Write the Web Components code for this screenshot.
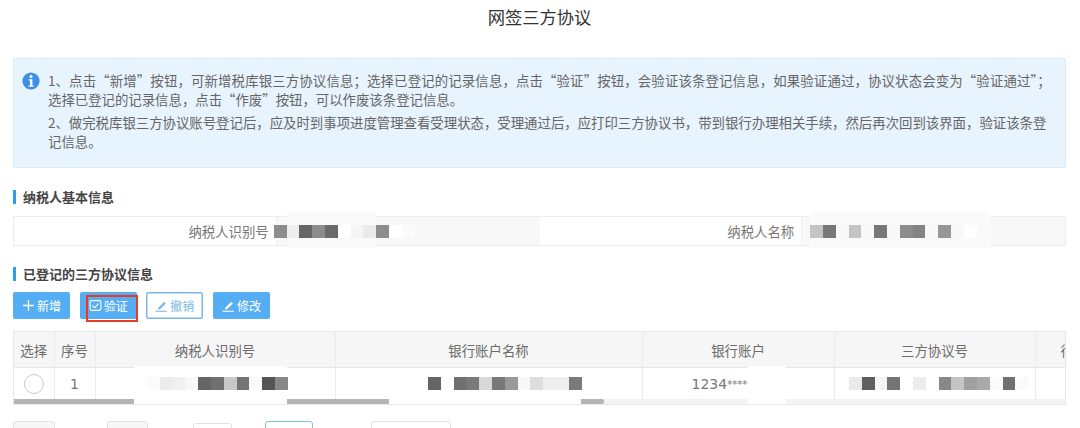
<!DOCTYPE html>
<html lang="zh-CN">
<head>
<meta charset="utf-8">
<title>网签三方协议</title>
<style>
    html, body { margin: 0; height: 428px; overflow: hidden; background: #fff; }
    body { box-sizing: border-box; padding: 0 14px 0 13px; font-family: "Noto Sans CJK SC", "Noto Sans", sans-serif; color: #666; }
    .wide { letter-spacing: .15px; }
</style>
</head>
<body>
<page-title>网签三方协议</page-title>
<tip-box>
    <p><span class="wide">1、点击“新增”按钮，可新增税库银三方协议信息；选择已登记的记录信息，点击“验证”按钮，会验证该条登记信息，如果验证通过，协议状态会变为“验证通过”；</span><br>选择已登记的记录信息，点击“作废”按钮，可以作废该条登记信息。</p>
    <p>2、做完税库银三方协议账号登记后，应及时到事项进度管理查看受理状态，受理通过后，应打印三方协议书，带到银行办理相关手续，然后再次回到该界面，验证该条登<br>记信息。</p>
</tip-box>
<section-title>纳税人基本信息</section-title>
<info-row></info-row>
<section-title class="second">已登记的三方协议信息</section-title>
<action-bar></action-bar>
<agreement-table></agreement-table>
<pager-stub></pager-stub>

<script>
    class PageTitle extends HTMLElement {
        constructor() {
            super();
            this.attachShadow({ mode: 'open' }).innerHTML = `
                <style>
                :host { display: block; height: 58px; text-align: center; font-size: 17.3px; line-height: 34px; color: #333; }
                </style>
                <slot></slot>`;
        }
    }

    class TipBox extends HTMLElement {
        constructor() {
            super();
            this.attachShadow({ mode: 'open' }).innerHTML = `
                <style>
                :host {
                    display: flex; gap: 8px; box-sizing: border-box; height: 110px;
                    padding: 12px 8px 0 8px;
                    background: #e7f3fd; border: 1px solid #d9ebf8; border-radius: 2px;
                    font-size: 13.4px; line-height: 18.5px; color: #666;
                }
                svg { flex: none; width: 18px; height: 18px; margin-top: 1px; }
                ::slotted(p) { margin: 0 0 5px; white-space: nowrap; }
                </style>
                <svg viewBox="0 0 18 18">
                    <circle cx="9" cy="9" r="8.6" fill="#3d90e8"/>
                    <circle cx="9" cy="4.6" r="1.5" fill="#fff"/>
                    <path d="M6.8 7.2h3.6v6.2h1.2v1.3H6.6v-1.3h1.4V8.5H6.8z" fill="#fff"/>
                </svg>
                <div><slot></slot></div>`;
        }
    }

    class SectionTitle extends HTMLElement {
        constructor() {
            super();
            this.attachShadow({ mode: 'open' }).innerHTML = `
                <style>
                :host {
                    display: block; margin-top: 22px; height: 14px; padding-left: 7px;
                    border-left: 3px solid #2f9bec;
                    font-size: 13px; font-weight: 700; line-height: 14px; color: #444;
                }
                :host(.second) { margin-top: 21px; }
                </style>
                <slot></slot>`;
        }
    }

    // pixelated block that hides a taxpayer number
    class BlurMosaic extends HTMLElement {
        constructor() {
            super();
            const cells = (this.getAttribute('colors') || '').split(',')
                .map((c) => `<i style="background:#${c}"></i>`)
                .join('');
            this.attachShadow({ mode: 'open' }).innerHTML = `
                <style>
                :host { display: inline-flex; flex: none; height: 13px; }
                i { display: block; width: 12.8px; height: 13px; }
                </style>
                ${cells}`;
        }
    }

    class InfoRow extends HTMLElement {
        constructor() {
            super();
            this.attachShadow({ mode: 'open' }).innerHTML = `
                <style>
                :host {
                    display: grid; grid-template-columns: repeat(4, 1fr); height: 30px; box-sizing: border-box;
                    margin-top: 12px; position: relative;
                    border: 1px solid #ececec;
                    font-size: 13.4px; color: #777;
                }
                .label { display: flex; align-items: center; justify-content: flex-end; padding-right: 7px; background: #fff; border-right: 1px solid #efefef; }
                .value { display: flex; align-items: center; background: #f8f8f8; min-width: 0; }
                .patch { position: absolute; top: -5px; height: 36px; background: #fafafa; }
                blur-mosaic { position: relative; z-index: 1; }
                </style>
                <div class="label">纳税人识别号</div>
                <div class="value"><blur-mosaic style="margin-left:-3px" colors="8c8c8c,eeeeee,666666,8c8c8c,6a6a6a,ffffff,f5f5f5,eaeaea,8c8c8c,ffffff,fbfbfb"></blur-mosaic></div>
                <div class="label">纳税人名称</div>
                <div class="value"><blur-mosaic style="margin-left:8px" colors="c4c4c4,787878,f8f8f8,c4c4c4,f8f8f8,787878,f8f8f8,8c8c8c,848484,f8f8f8,969696,f8f8f8,ffffff"></blur-mosaic></div>
                <div class="patch" style="left:273px;width:89px"></div>
                <div class="patch" style="left:796px;width:180px"></div>`;
        }
    }

    const ICONS = {
        plus: '<path d="M6 1v10M1 6h10" stroke="currentColor" stroke-width="1.2" fill="none"/>',
        check: '<rect x="1" y="1.5" width="10" height="9" rx="1.5" stroke="currentColor" fill="none"/><path d="M3.2 6l2 2 3.6-3.8" stroke="currentColor" fill="none"/>',
        pen: '<path d="M3 8l5.5-5.5 1.6 1.6L4.6 9.4 2.6 9.8z" fill="currentColor"/><path d="M0.5 11.3h10.5" stroke="currentColor" fill="none"/>'
    };

    class ActionButton extends HTMLElement {
        constructor() {
            super();
            const icon = this.getAttribute('icon');
            this.attachShadow({ mode: 'open' }).innerHTML = `
                <style>
                :host {
                    display: inline-flex; align-items: center; justify-content: center; gap: 2px;
                    box-sizing: border-box; height: 27px; width: 57px;
                    background: #55aef3; color: #fff; border-radius: 2px;
                    font-size: 12px;
                }
                :host(.plain) { background: #fff; color: #79b8e8; border: 1px solid #79b8e8; box-shadow: inset 0 0 0 .5px #79b8e8; }
                svg { width: 13px; height: 13px; flex: none; }
                </style>
                <svg viewBox="0 0 12 12">${ICONS[icon]}</svg><slot></slot>`;
        }
    }

    class ActionBar extends HTMLElement {
        constructor() {
            super();
            this.attachShadow({ mode: 'open' }).innerHTML = `
                <style>
                :host { display: flex; gap: 9.7px; margin-top: 11px; position: relative; }
                .mark { position: absolute; left: 72.5px; top: 3px; width: 52px; height: 27px; box-sizing: border-box; border: 2px solid #ea3a22; }
                </style>
                <action-button icon="plus">新增</action-button>
                <action-button icon="check">验证</action-button>
                <action-button icon="pen" class="plain">撤销</action-button>
                <action-button icon="pen">修改</action-button>
                <div class="mark"></div>`;
        }
    }

    class AgreementTable extends HTMLElement {
        constructor() {
            super();
            const heads = ['选择', '序号', '纳税人识别号', '银行账户名称', '银行账户', '三方协议号', '待'];
            this.attachShadow({ mode: 'open' }).innerHTML = `
                <style>
                :host {
                    display: block; position: relative; margin-top: 12px; height: 74px; box-sizing: border-box;
                    border: 1px solid #e8e8e8; overflow: hidden;
                    font-size: 13.4px; color: #6b6b6b;
                }
                .grid { display: grid; grid-template-columns: 40.5px 41px 240px 307px 192px 201px 30px; }
                .head, .cell { display: flex; align-items: center; justify-content: center; border-right: 1px solid #ebebeb; box-sizing: border-box; white-space: nowrap; overflow: hidden; }
                .head { height: 36px; background: #f6f6f6; border-bottom: 1px solid #e6e6e6; }
                .head:nth-child(7) { justify-content: flex-start; padding-left: 25px; border-right: 0; }
                .cell { height: 31px; background: #fff; }
                .cell:last-child { border-right: 0; }
                .left { justify-content: flex-start; }
                .radio { width: 18px; height: 18px; border: 1.5px solid #c9c9c9; border-radius: 50%; background: #fff; }
                .num { font-family: "DejaVu Sans", sans-serif; font-size: 14px; color: #777; }
                .num small { font-size: 10px; position: relative; top: -1px; }
                .track { height: 5px; background: #f3f3f3; }
                .thumb { width: 590px; height: 5px; background: #b5b5b5; border-radius: 0 2px 2px 0; }
                .patch { position: absolute; background: #fff; }
                blur-mosaic { position: relative; z-index: 1; }
                .account { position: relative; z-index: 1; margin-left: 49px; }
                </style>
                <div class="grid">
                    ${heads.map((h) => `<div class="head">${h}</div>`).join('')}
                    <div class="cell"><span class="radio"></span></div>
                    <div class="cell num">1</div>
                    <div class="cell left"><blur-mosaic style="margin-left:51.5px" colors="fbfbfb,ececec,f0f0f0,f8f8f8,666666,707070,c8c8c8,747474,fafafa,555555,888888"></blur-mosaic></div>
                    <div class="cell left"><blur-mosaic style="margin-left:92.5px" colors="666666,ffffff,707070,7a7a7a,d8d8d8,787878,999999,f8f8f8,dddddd,eeeeee,eeeeee,7a7a7a"></blur-mosaic></div>
                    <div class="cell left num"><span class="account">1234<small>****</small></span></div>
                    <div class="cell left"><blur-mosaic style="margin-left:14.5px" colors="eaeaea,5f5f5f,f4f4f4,747474,ffffff,ececec,ffffff,888888,c4c4c4,a0a0a0,aaaaaa,fafafa,707070,fafafa"></blur-mosaic></div>
                    <div class="cell"></div>
                </div>
                <div class="track"><div class="thumb"></div></div>
                <div class="patch" style="left:120px;top:34px;width:153px;height:39px"></div>
                <div class="patch" style="left:375px;top:66px;width:192px;height:7px"></div>
                <div class="patch" style="left:734px;top:34px;width:38px;height:39px"></div>`;
        }
    }

    // top edge of the paging controls, the window cuts off the rest
    class PagerStub extends HTMLElement {
        constructor() {
            super();
            this.attachShadow({ mode: 'open' }).innerHTML = `
                <style>
                :host { display: flex; margin-top: 16px; height: 7px; overflow: hidden; }
                div { box-sizing: border-box; height: 30px; flex: none; border: 1px solid #e2e2e2; border-radius: 3px; }
                .grey { background: #f7f7f7; }
                .on { border-color: #7fbfe6; border-width: 1.5px; }
                </style>
                <div class="grey" style="width:42px"></div>
                <div class="grey" style="width:41px;margin-left:52px"></div>
                <div style="width:39px;margin-left:45px;margin-top:2px"></div>
                <div class="on" style="width:48px;margin-left:33px"></div>
                <div style="width:80px;margin-left:58px"></div>`;
        }
    }

    customElements.define('page-title', PageTitle);
    customElements.define('tip-box', TipBox);
    customElements.define('section-title', SectionTitle);
    customElements.define('blur-mosaic', BlurMosaic);
    customElements.define('info-row', InfoRow);
    customElements.define('action-button', ActionButton);
    customElements.define('action-bar', ActionBar);
    customElements.define('agreement-table', AgreementTable);
    customElements.define('pager-stub', PagerStub);
</script>
</body>
</html>
